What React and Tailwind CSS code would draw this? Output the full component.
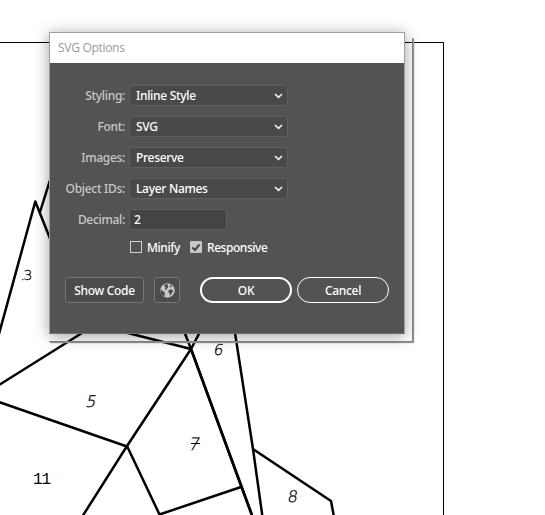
import React from "react";

const strokes = [
  "M-1 334L35.3 201.5L51 241",
  "M40 212L51 177",
  "M-1 385L86 330.5",
  "M120 331L191 349",
  "M-1 402L127 446.5",
  "M82 517L127 446L191 349L201 330",
  "M184 331L191 349L241.500 487L252.500 517",
  "M127 446L159.500 514.500L241 487",
  "M234.700 331L253 449L262.500 517",
  "M253 449L331 501L334 517",
];

function Drawing() {
  return (
    <svg className="absolute inset-0" width="545" height="515" viewBox="0 0 545 515" fill="none" stroke="#000">
      <path d="M0 42.5H443.5V515" />
      {strokes.map((d) => <path key={d} d={d} strokeWidth="2.5" strokeLinejoin="round" />)}
      <path d="M191 349L252 515" strokeWidth="2.6" />
      <g fill="#000" stroke="#000" strokeWidth="0.3" fontFamily="'DejaVu Sans', sans-serif" fontWeight="200" fontSize="15">
        <text x="20.500" y="280" fontSize="14" letterSpacing="-1.5">.3</text>
        <text x="0" y="0" fontSize="16" transform="translate(85 407) skewX(-14)">5</text>
        <text x="33" y="484" fontSize="16" stroke="none" fontFamily="'Liberation Mono', monospace" textLength="18">11</text>
        <text x="0" y="0" transform="translate(213 355) skewX(-10)">6</text>
        <text x="0" y="0" fontSize="17" transform="translate(188 450) skewX(-12)">7</text>
        <path d="M191 443.500H200" strokeWidth="1" />
        <text x="0" y="0" fontSize="16" transform="translate(287 502) skewX(-8)">8</text>
      </g>
    </svg>
  );
}

function Row({ label, children }) {
  return (
    <div className="flex h-[21px] items-center">
      <label className="w-[75px] whitespace-nowrap text-right text-[#c8c8c8]">{label}</label>
      <div className="ml-[4px]">{children}</div>
    </div>
  );
}

function Select({ value }) {
  return (
    <div className="flex h-[21px] w-[159px] items-center justify-between rounded-[3px] border border-[#5f5f5f] bg-[#494949] pl-[6px] pr-[4px]">
      <span>{value}</span>
      <svg width="9" height="6" viewBox="0 0 9 6" fill="none" stroke="#f2f2f2" strokeWidth="1.6">
        <path d="M1 1L4.500 4.300L8 1" />
      </svg>
    </div>
  );
}

function Globe() {
  return (
    <svg width="15" height="15" viewBox="0 0 15 15">
      <circle cx="7.500" cy="7.500" r="7.200" fill="#c8c8c8" />
      <path d="M4.500 1.800L6.500 1L8.300 1.800L7.500 3.200L8.500 4.300L7 5.500L5.800 7.200L4.800 6.300L5.800 4.500L4.300 3.500Z" fill="#4c4c4c" />
      <path d="M.4 6.300L2.200 7.700L4.200 8.700L5 10.500L4.200 13.500L2 12L.7 9.500Z" fill="#4c4c4c" />
      <path d="M8.300 7.800L10 6.500L12.500 6.800L13.200 8L12 9.500L11.200 11.700L9.800 12.500L9.600 10L8.300 9.200Z" fill="#4c4c4c" />
      <path d="M10.300 1.800L12 3.300L10.800 4.600L9.600 3.600Z" fill="#4c4c4c" />
    </svg>
  );
}

export default function App() {
  return (
    <main className="relative h-[515px] w-[545px] overflow-hidden bg-white">
      <Drawing />
      <div className="absolute left-[49px] top-[38px] h-[304px] w-[364px] border-b border-r border-[#858585] shadow-[1px_1px_1px_#999]" />
      <section className="absolute left-[49px] top-[32px] h-[302px] w-[356px] border border-[#a0a0a0] border-b-[#707070] bg-[#535353] font-['Noto_Sans',sans-serif] text-[12px] font-medium leading-[18px] tracking-[-0.3px] text-white shadow-[0_2px_14px_rgba(0,0,0,0.38)]">
        <header className="flex h-[30px] items-center bg-white pl-2 font-['Open_Sans',sans-serif] text-[12px] font-normal tracking-[-0.3px] text-[#999]">SVG Options</header>
        <div className="flex flex-col gap-[10px] pt-[22px]">
          <Row label="Styling:"><Select value="Inline Style" /></Row>
          <Row label="Font:"><Select value="SVG" /></Row>
          <Row label="Images:"><Select value="Preserve" /></Row>
          <Row label="Object IDs:"><Select value="Layer Names" /></Row>
          <Row label="Decimal:">
            <div className="flex h-[21px] w-[98px] items-center rounded-[3px] border border-[#5f5f5f] bg-[#444] pl-1">2</div>
          </Row>
        </div>
        <div className="mt-[8px] flex h-[18px] items-center pl-[80px] tracking-[-0.45px]">
          <span className="h-3 w-3 border border-[#d0d0d0]" />
          <span className="ml-[5px] w-[43px] pt-[2px]">Minify</span>
          <span className="flex h-3 w-3 items-center justify-center rounded-[1px] bg-[#c8c8c8]">
            <svg width="10" height="9" viewBox="0 0 10 9" fill="none" stroke="#484848" strokeWidth="2"><path d="M1.200 4.500L4 7L8.500 1.500" /></svg>
          </span>
          <span className="ml-[5px] pt-[2px]">Responsive</span>
        </div>
        <footer className="mt-[21px] flex pl-[15px]">
          <button className="h-[26px] w-[79px] rounded-[3px] border border-[#777] bg-[#4c4c4c] pt-[2px]">Show Code</button>
          <button className="ml-[10px] flex h-[26px] w-[26px] items-center justify-center rounded-[3px] border border-[#777] bg-[#4c4c4c]"><Globe /></button>
          <button className="ml-[20px] h-[26px] w-[92px] rounded-full border-2 border-white pt-[2px]">OK</button>
          <button className="ml-[5px] h-[26px] w-[92px] rounded-full border border-white pt-[2px]">Cancel</button>
        </footer>
      </section>
    </main>
  );
}
